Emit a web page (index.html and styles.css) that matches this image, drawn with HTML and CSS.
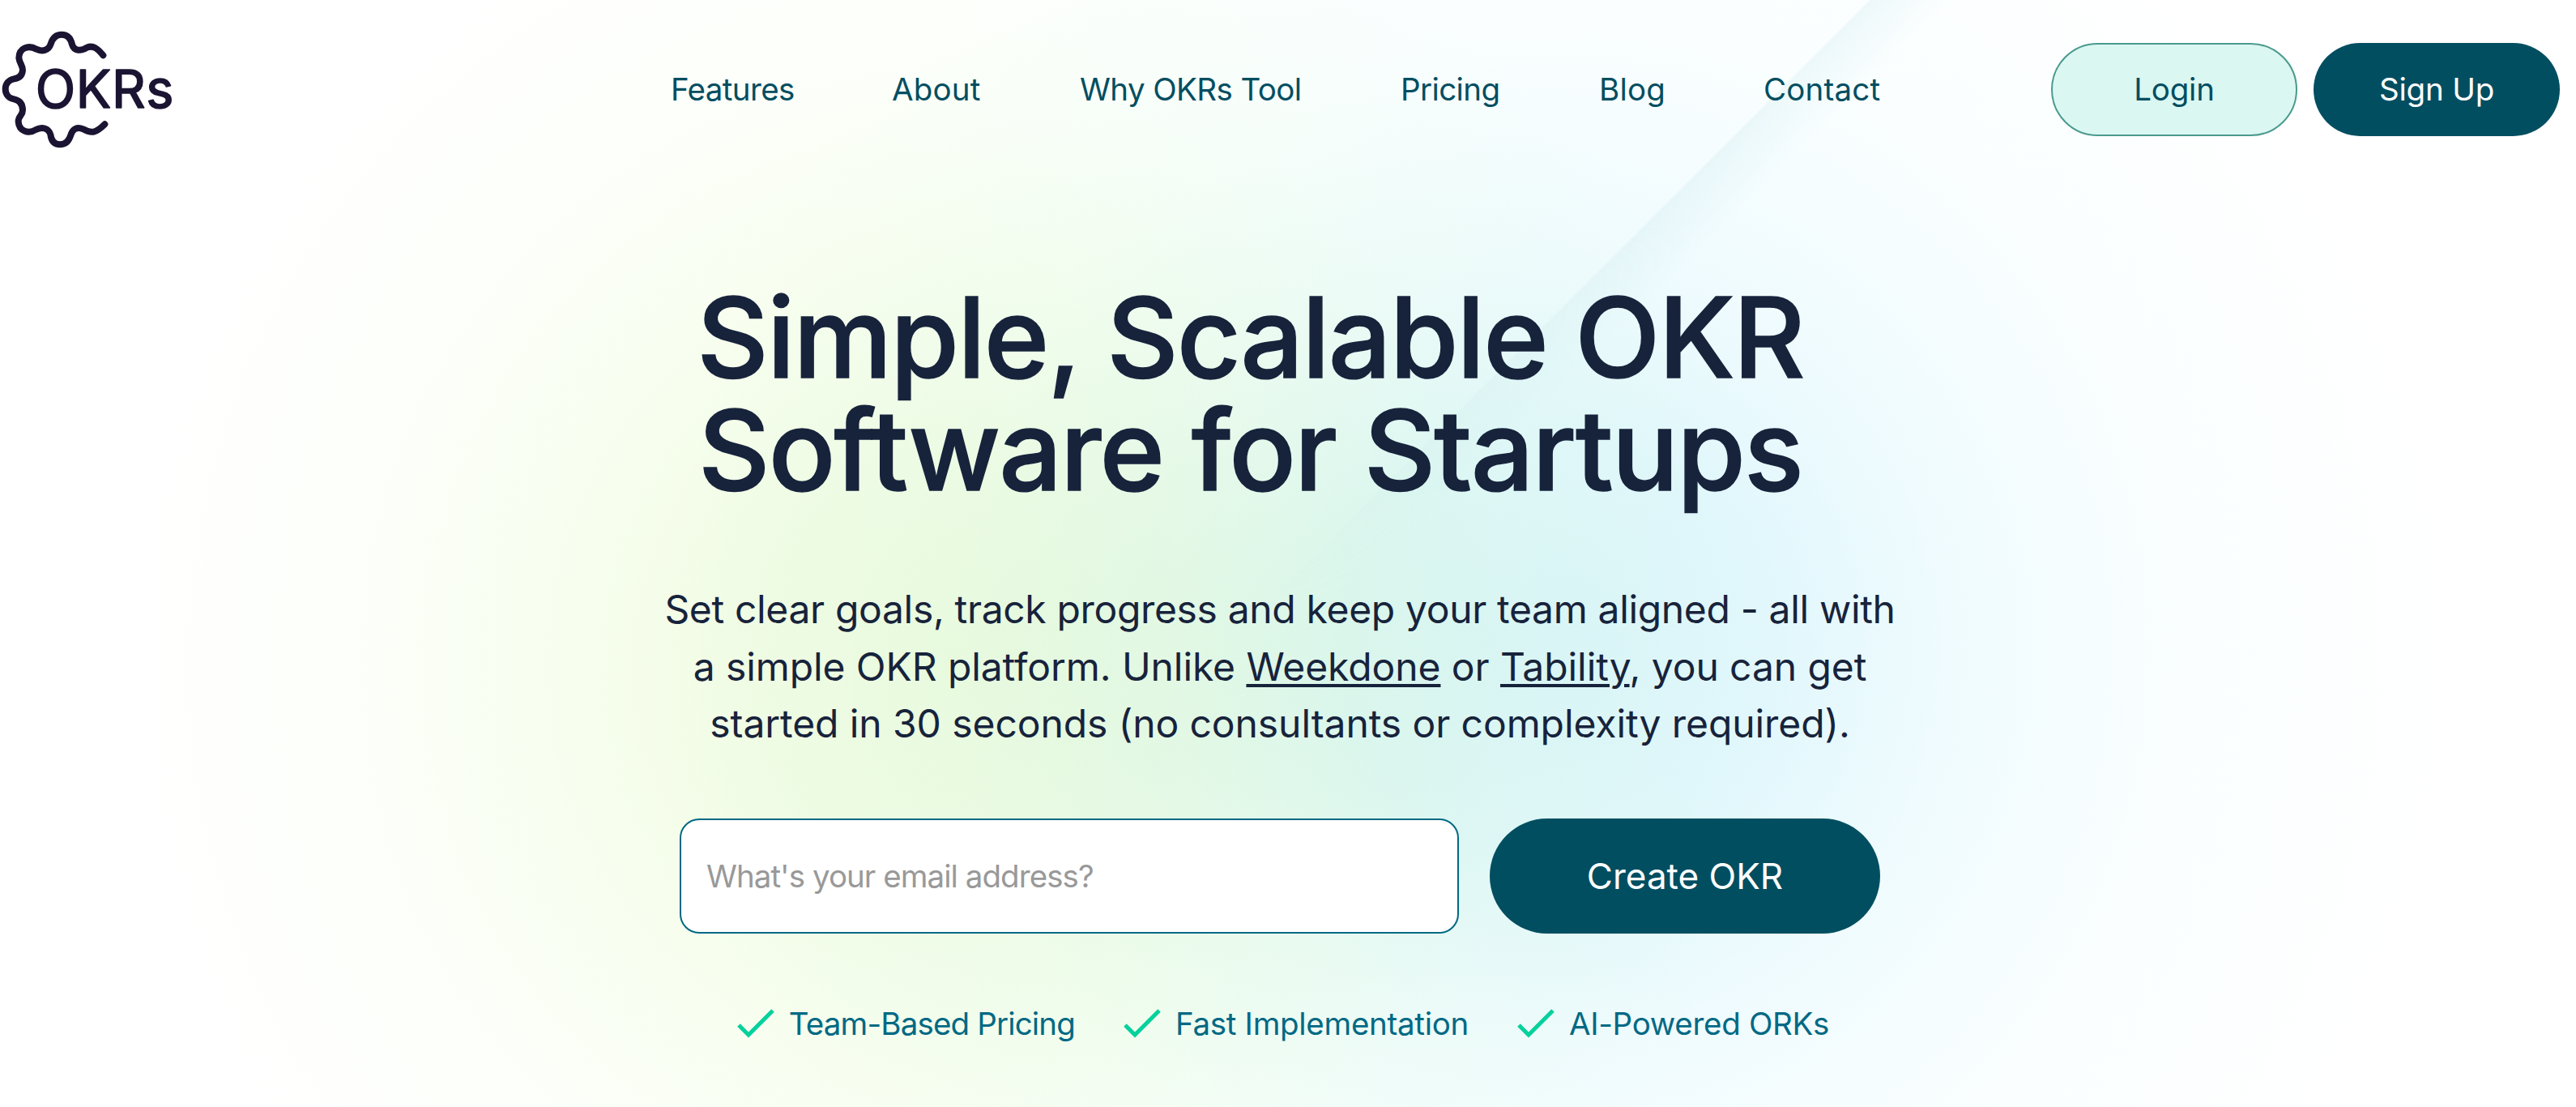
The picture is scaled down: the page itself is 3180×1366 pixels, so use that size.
FILE: index.html
```
<!DOCTYPE html>
<html lang="en">

<head>
    <meta charset="UTF-8">
    <meta name="viewport" content="width=device-width, initial-scale=1.0">
    <title>OKRs Tool</title>
    <link rel="stylesheet" href="styles.css">
</head>

<body>
    <div class="page">
        <header class="header">
            <a class="logo" href="#">
                <svg viewBox="0 0 720 540" width="240" height="180">
                    <path d="M382 145 C362 120 345 106 322 116 C300 130 275 130 267 105 C262 80 248 68 228 68 C206 68 194 82 188 103 C180 128 155 132 135 122 C105 105 70 118 70 155 C72 175 84 180 84 200 C82 222 68 230 52 232 C32 236 20 250 20 270 C20 290 34 304 52 307 C72 311 84 325 84 348 C84 368 68 368 68 390 C70 425 105 438 133 420 C155 408 180 414 187 438 C190 462 202 475 222 475 C244 475 256 460 262 440 C268 418 285 408 308 418 C340 436 355 432 388 400" />
                    <text x="131" y="339" textLength="512">OKRs</text>
                </svg>
            </a>
            <nav class="nav">
                <a href="#">Features</a>
                <a href="#" class="wide">About</a>
                <a href="#">Why OKRs Tool</a>
                <a href="#">Pricing</a>
                <a href="#" class="wide">Blog</a>
                <a href="#" class="wide">Contact</a>
            </nav>
            <div class="actions">
                <a class="btn btn-light" href="#">Login</a>
                <a class="btn" href="#">Sign Up</a>
            </div>
        </header>

        <main class="hero">
            <h1>Simple, Scalable OKR<br>Software for Startups</h1>
            <p class="lead">
                <span class="tight">Set clear goals, track progress and keep your team aligned - all with</span><br>
                a simple OKR platform. Unlike <a href="#">Weekdone</a> or <a href="#">Tability</a>, you can get<br>
                started in 30 seconds (no consultants or complexity required).
            </p>
            <form class="signup">
                <input type="email" placeholder="What's your email address?">
                <button type="button">Create OKR</button>
            </form>
            <ul class="features">
                <li>
                    <svg viewBox="0 0 46 36" width="46" height="36"><path d="M2 20 L14 32 L44 2" /></svg>
                    <span class="tight">Team-Based Pricing</span>
                </li>
                <li>
                    <svg viewBox="0 0 46 36" width="46" height="36"><path d="M2 20 L14 32 L44 2" /></svg>
                    <span>Fast Implementation</span>
                </li>
                <li>
                    <svg viewBox="0 0 46 36" width="46" height="36"><path d="M2 20 L14 32 L44 2" /></svg>
                    <span>AI-Powered ORKs</span>
                </li>
            </ul>
        </main>
    </div>
</body>

</html>
```
FILE: styles.css
```
* {
    box-sizing: border-box;
}

body {
    margin: 0;
    font-family: Inter, "Liberation Sans", sans-serif;
    font-size: 38.5px;
    color: #17233b;
    background-color: #fff;
}

a {
    color: inherit;
    text-decoration: none;
}

.page {
    position: relative;
    height: 1366px;
    overflow: hidden;
    background-color: #fff;
    background-image:
        radial-gradient(circle at 1180px 820px, #edfbde 0, #f1fce4 260px, #f7feee 480px, #fcfff9 720px, #fff 1020px),
        radial-gradient(circle at 1920px 800px, #dbf5fb 0, #e1f7fc 260px, #effbfe 480px, #f9feff 740px, #fff 1100px);
    background-blend-mode: multiply;
}

/* diagonal sheen behind the header and title */
.page::before {
    content: "";
    position: absolute;
    inset: 0;
    background: linear-gradient(135deg, transparent 50.75%, rgba(185, 226, 230, 0.2) 50.8%, transparent 53%);
    -webkit-mask-image: linear-gradient(#000 20%, transparent 55%);
    mask-image: linear-gradient(#000 20%, transparent 55%);
}

.header {
    position: relative;
    display: flex;
    align-items: center;
    height: 220px;
    padding-right: 20px;
    color: #024e61;
}

.logo svg {
    display: block;
}

.logo path {
    fill: none;
    stroke: #1b1432;
    stroke-width: 24;
    stroke-linecap: round;
    stroke-linejoin: round;
}

.logo text {
    font-size: 194px;
    font-weight: 400;
    fill: #1b1432;
    stroke: #1b1432;
    stroke-width: 5;
    stroke-linejoin: round;
}

.nav {
    display: grid;
    grid-template-columns: 273px 232px 396px 245px 203px auto;
    margin-left: 588px;
    letter-spacing: -0.6px;
}

.nav .wide {
    letter-spacing: 0.2px;
}

.actions {
    display: flex;
    gap: 20px;
    margin-left: auto;
}

.btn {
    width: 304px;
    height: 115px;
    border-radius: 58px;
    line-height: 115px;
    text-align: center;
    letter-spacing: -0.2px;
    color: #fff;
    background-color: #024e61;
}

.btn-light {
    color: #024e61;
    background-color: #dbf7f1;
    border: 2px solid #4a9a8f;
    line-height: 111px;
}

.hero {
    position: relative;
    padding: 127px 20px 0 0;
    text-align: center;
}

h1 {
    margin: 0;
    padding-right: 73px;
    font-size: 137px;
    font-weight: 500;
    line-height: 139px;
    letter-spacing: -1.9px;
    -webkit-text-stroke: 1.5px #17233b;
}

.lead {
    margin: 92px 0 0;
    font-size: 48px;
    line-height: 70.5px;
    letter-spacing: -0.08px;
}

.lead .tight {
    letter-spacing: -0.34px;
}

.lead a {
    text-decoration: underline;
    text-decoration-thickness: 4px;
    text-underline-offset: 4px;
}

.signup {
    display: flex;
    justify-content: center;
    gap: 38px;
    margin-top: 81px;
}

.signup input {
    width: 962px;
    height: 142px;
    padding: 0 31px;
    border: 2px solid #006984;
    border-radius: 24px;
    font: inherit;
    letter-spacing: -0.95px;
    background-color: #fff;
}

.signup input::placeholder {
    color: #999;
    opacity: 1;
}

.signup button {
    width: 482px;
    height: 142px;
    border: none;
    border-radius: 71px;
    font: inherit;
    font-size: 44px;
    color: #fff;
    background-color: #024e61;
}

.features {
    display: flex;
    justify-content: center;
    gap: 60px;
    margin: 88px 0 0;
    padding: 0 0 0 8px;
    list-style: none;
    letter-spacing: -0.3px;
    color: #006984;
}

.features li {
    display: flex;
    align-items: center;
    gap: 18px;
}

.features .tight {
    letter-spacing: -0.85px;
}

.features path {
    fill: none;
    stroke: #06d19c;
    stroke-width: 5;
}
```
